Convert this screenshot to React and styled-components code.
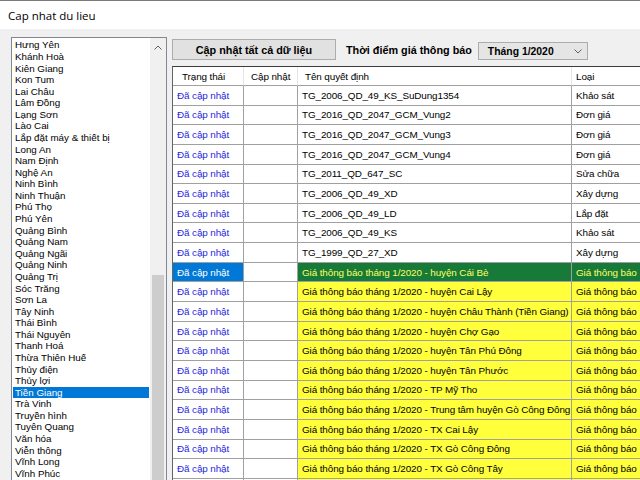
import React from 'react';
import styled, { createGlobalStyle } from 'styled-components';

const GlobalStyle = createGlobalStyle`
  html, body {
    margin: 0;
    padding: 0;
    background: #f0f0f0;
  }
  body {
    width: 640px;
    height: 480px;
    overflow: hidden;
    font-family: "Liberation Sans", Arial, sans-serif;
  }
`;

const provinces = [
  'Hưng Yên', 'Khánh Hoà', 'Kiên Giang', 'Kon Tum', 'Lai Châu', 'Lâm Đồng', 'Lạng Sơn',
  'Lào Cai', 'Lắp đặt máy & thiết bị', 'Long An', 'Nam Định', 'Nghệ An', 'Ninh Bình',
  'Ninh Thuận', 'Phú Thọ', 'Phú Yên', 'Quảng Bình', 'Quảng Nam', 'Quảng Ngãi',
  'Quảng Ninh', 'Quảng Trị', 'Sóc Trăng', 'Sơn La', 'Tây Ninh', 'Thái Bình',
  'Thái Nguyên', 'Thanh Hoá', 'Thừa Thiên Huế', 'Thủy điện', 'Thủy lợi', 'Tiền Giang',
  'Trà Vinh', 'Truyền hình', 'Tuyên Quang', 'Văn hóa', 'Viễn thông', 'Vĩnh Long', 'Vĩnh Phúc',
];

const gia = 'Giá thông báo tháng 1/2020 - ';

const rows = [
  { name: 'TG_2006_QD_49_KS_SuDung1354', type: 'Khảo sát' },
  { name: 'TG_2016_QD_2047_GCM_Vung2', type: 'Đơn giá' },
  { name: 'TG_2016_QD_2047_GCM_Vung3', type: 'Đơn giá' },
  { name: 'TG_2016_QD_2047_GCM_Vung4', type: 'Đơn giá' },
  { name: 'TG_2011_QD_647_SC', type: 'Sửa chữa' },
  { name: 'TG_2006_QD_49_XD', type: 'Xây dựng' },
  { name: 'TG_2006_QD_49_LD', type: 'Lắp đặt' },
  { name: 'TG_2006_QD_49_KS', type: 'Khảo sát' },
  { name: 'TG_1999_QD_27_XD', type: 'Xây dựng' },
  { name: gia + 'huyện Cái Bè', type: 'Giá thông báo', tone: 'selected' },
  { name: gia + 'huyện Cai Lậy', type: 'Giá thông báo', tone: 'yellow' },
  { name: gia + 'huyện Châu Thành (Tiền Giang)', type: 'Giá thông báo', tone: 'yellow' },
  { name: gia + 'huyện Chợ Gạo', type: 'Giá thông báo', tone: 'yellow' },
  { name: gia + 'huyện Tân Phú Đông', type: 'Giá thông báo', tone: 'yellow' },
  { name: gia + 'huyện Tân Phước', type: 'Giá thông báo', tone: 'yellow' },
  { name: gia + 'TP Mỹ Tho', type: 'Giá thông báo', tone: 'yellow' },
  { name: gia + 'Trung tâm huyện Gò Công Đông', type: 'Giá thông báo', tone: 'yellow' },
  { name: gia + 'TX Cai Lậy', type: 'Giá thông báo', tone: 'yellow' },
  { name: gia + 'TX Gò Công Đông', type: 'Giá thông báo', tone: 'yellow' },
  { name: gia + 'TX Gò Công Tây', type: 'Giá thông báo', tone: 'yellow' },
  { name: gia + 'TX Tân Phú', type: 'Giá thông báo', tone: 'yellow' },
];

const Window = styled.div`
  display: flex;
  flex-direction: column;
  width: 640px;
  height: 480px;
  overflow: hidden;
`;

const TitleBar = styled.div`
  height: 28px;
  flex: none;
  display: flex;
  align-items: center;
  padding-left: 8px;
  background: #ffffff;
  border-top: 1px solid #7a7a7a;
  font-family: "Open Sans", "Noto Sans", sans-serif;
  font-size: 11.5px;
  color: #000;
`;

const Body = styled.div`
  flex: 1;
  display: flex;
  padding-left: 11px;
  min-height: 0;
`;

const ListBox = styled.div`
  width: 156px;
  margin-top: 8px;
  flex: none;
  display: flex;
  border: 1px solid #828790;
  border-bottom: none;
  background: #fff;
  box-sizing: border-box;
`;

const ListItems = styled.div`
  flex: 1;
  padding: 1.4px 1px 0 1px;
`;

const ListItem = styled.div`
  height: 11.59px;
  line-height: 11.59px;
  padding-left: 2px;
  font-size: 9.8px;
  white-space: nowrap;
  background: ${p => (p.$active ? '#0078d7' : 'transparent')};
  color: ${p => (p.$active ? '#fff' : '#000')};
`;

const ScrollTrack = styled.div`
  width: 16px;
  flex: none;
  display: flex;
  flex-direction: column;
  align-items: center;
  background: #f0f0f0;
`;

const ScrollArrow = styled.div`
  height: 17px;
  display: flex;
  align-items: center;
  justify-content: center;
  margin-top: 1px;
`;

const ScrollThumb = styled.div`
  width: 12px;
  flex: 1;
  margin-top: 219px;
  background: #cdcdcd;
`;

const RightPane = styled.div`
  flex: 1;
  display: flex;
  flex-direction: column;
  margin-left: 5px;
  padding-top: 10px;
  min-width: 0;
`;

const Toolbar = styled.div`
  display: flex;
  align-items: center;
  height: 21px;
`;

const Button = styled.div`
  width: 164px;
  height: 21px;
  box-sizing: border-box;
  display: flex;
  align-items: center;
  justify-content: center;
  background: #e1e1e1;
  border: 1px solid #adadad;
  font-weight: bold;
  font-size: 10.8px;
`;

const Label = styled.div`
  margin-left: 10px;
  font-weight: bold;
  font-size: 10.8px;
`;

const Select = styled.div`
  margin-left: 6px;
  width: 110px;
  height: 18px;
  margin-top: 3px;
  box-sizing: border-box;
  display: flex;
  align-items: center;
  justify-content: space-between;
  padding: 0 5px 0 9px;
  background: #e5e5e5;
  border: 1px solid #acacac;
  font-weight: bold;
  font-size: 10.4px;
`;

const Grid = styled.div`
  margin-top: 6px;
  border-top: 1px solid #3c3c3c;
  border-left: 1px solid #646464;
  background: #fff;
`;

const Row = styled.div`
  display: grid;
  grid-template-columns: 71px 54px 274px 100px;
  height: ${p => (p.$head ? '19px' : '19.65px')};
`;

const toneBg = { yellow: '#ffff3c', selected: '#177a38' };
const toneFg = { yellow: '#000', selected: '#ffff66' };

const Cell = styled.div`
  box-sizing: border-box;
  display: flex;
  align-items: center;
  padding-left: ${p => p.$pad || 4}px;
  border-right: 1px solid ${p => (p.$head ? '#e5e5e5' : '#a0a0a0')};
  border-bottom: 1px solid #a0a0a0;
  font-size: 9.9px;
  letter-spacing: -0.1px;
  white-space: nowrap;
  overflow: hidden;
  background: ${p => (p.$tone ? toneBg[p.$tone] : '#fff')};
  color: ${p => (p.$tone ? toneFg[p.$tone] : '#000')};
`;

const StatusCell = styled(Cell)`
  background: ${p => (p.$selected ? '#0078d7' : '#fff')};
  color: ${p => (p.$selected ? '#fff' : '#1f1fdc')};
`;

const Chevron = ({ up }) => (
  <svg width="8" height="5" viewBox="0 0 8 5">
    <path d={up ? 'M0.5 4.5 L4 1 L7.5 4.5' : 'M0.5 0.5 L4 4 L7.5 0.5'} fill="none" stroke="#606060" strokeWidth="1" />
  </svg>
);

export default function App() {
  return (
    <Window>
      <GlobalStyle />
      <TitleBar>Cap nhat du lieu</TitleBar>
      <Body>
        <ListBox>
          <ListItems>
            {provinces.map(p => (
              <ListItem key={p} $active={p === 'Tiền Giang'}>{p}</ListItem>
            ))}
          </ListItems>
          <ScrollTrack>
            <ScrollArrow><Chevron up /></ScrollArrow>
            <ScrollThumb />
          </ScrollTrack>
        </ListBox>
        <RightPane>
          <Toolbar>
            <Button>Cập nhật tất cả dữ liệu</Button>
            <Label>Thời điểm giá thông báo</Label>
            <Select>
              <span>Tháng 1/2020</span>
              <Chevron />
            </Select>
          </Toolbar>
          <Grid>
            <Row $head>
              <Cell $head $pad={9}>Trạng thái</Cell>
              <Cell $head $pad={7}>Cập nhật</Cell>
              <Cell $head $pad={7}>Tên quyết định</Cell>
              <Cell $head $pad={4}>Loại</Cell>
            </Row>
            {rows.map((r, i) => (
              <Row key={i}>
                <StatusCell $selected={r.tone === 'selected'}>Đã cập nhật</StatusCell>
                <Cell />
                <Cell $tone={r.tone}>{r.name}</Cell>
                <Cell $tone={r.tone}>{r.type}</Cell>
              </Row>
            ))}
          </Grid>
        </RightPane>
      </Body>
    </Window>
  );
}
